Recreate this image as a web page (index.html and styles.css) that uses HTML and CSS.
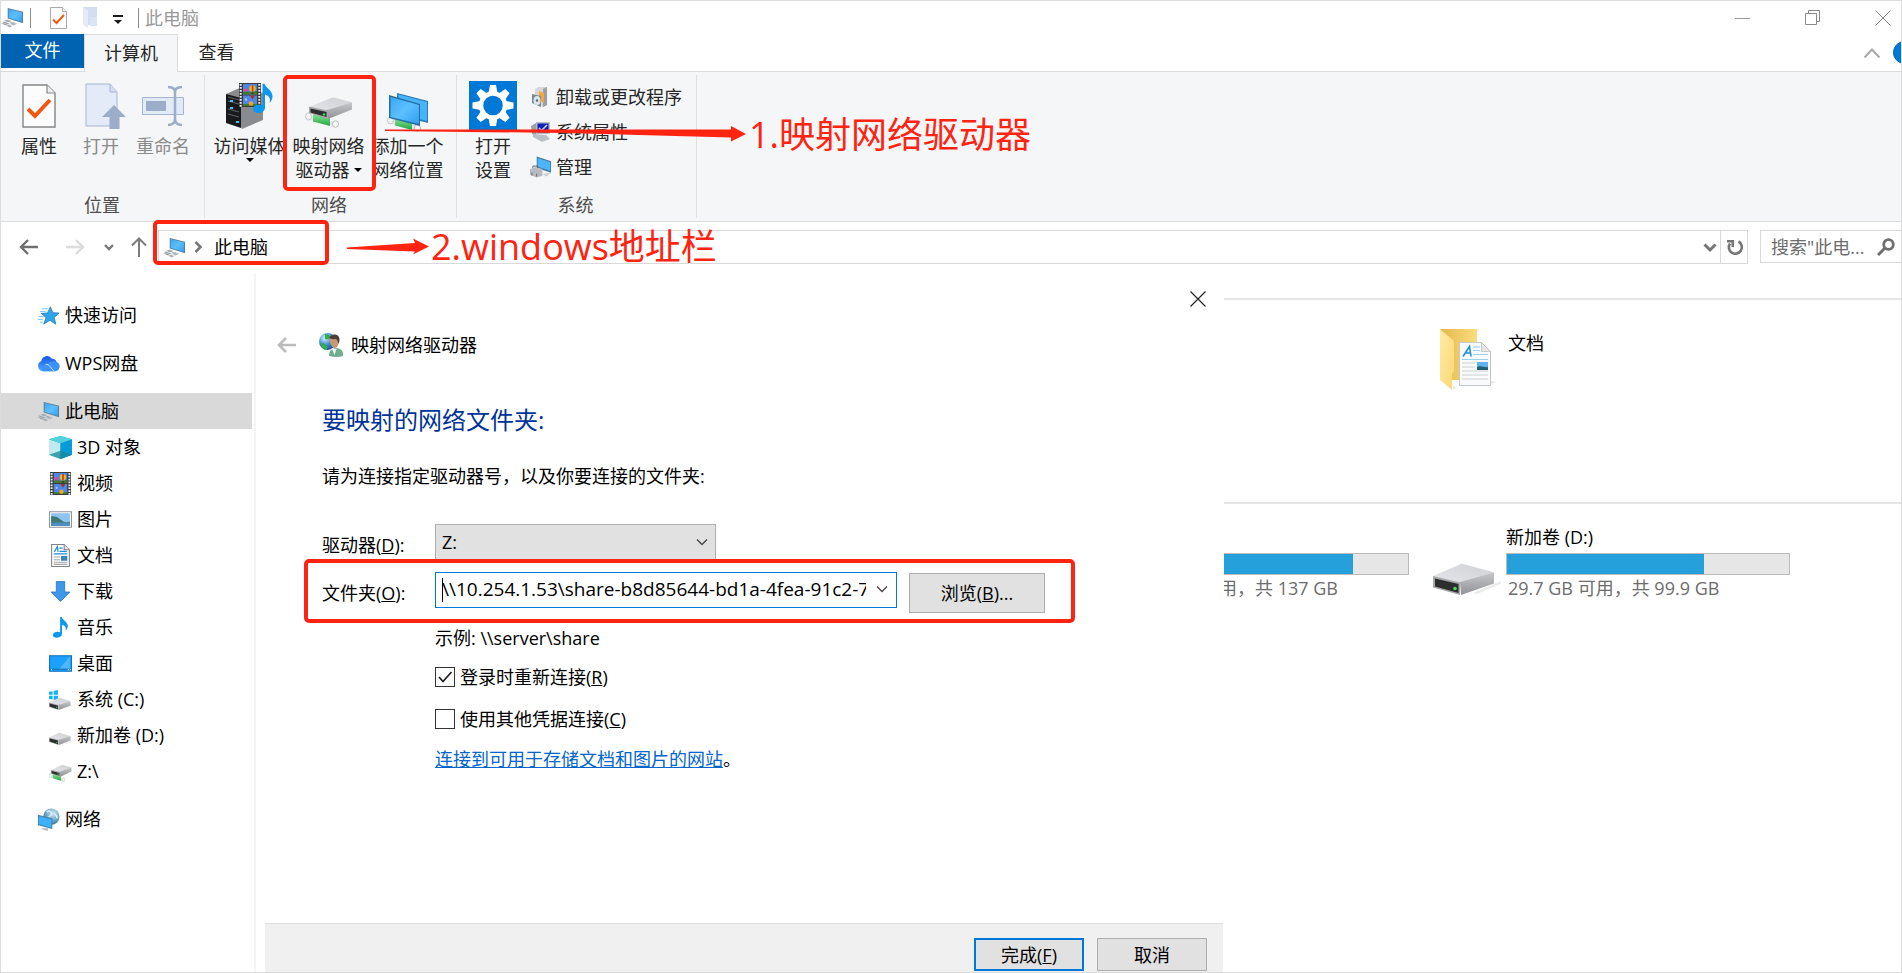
FILE: index.html
```html
<!DOCTYPE html>
<html lang="zh-CN">
<head>
<meta charset="utf-8">
<title>此电脑</title>
<link rel="stylesheet" href="styles.css">
</head>
<body>
<svg class="sprite" width="0" height="0" aria-hidden="true">
  <defs>
    <linearGradient id="g-screen" x1="0" y1="0" x2="1" y2="1"><stop offset="0" stop-color="#3aa6f2"/><stop offset=".5" stop-color="#5cc0ff"/><stop offset="1" stop-color="#2f9df0"/></linearGradient>
    <linearGradient id="g-top" x1="0" y1="1" x2="1" y2="0"><stop offset="0" stop-color="#e4e6ea"/><stop offset="1" stop-color="#cfd1d5"/></linearGradient>
    <linearGradient id="g-side" x1="0" y1="0" x2="0" y2="1"><stop offset="0" stop-color="#c6c7ca"/><stop offset="1" stop-color="#909295"/></linearGradient>
    <linearGradient id="g-pipe" x1="0" y1="0" x2="0" y2="1"><stop offset="0" stop-color="#8be89a"/><stop offset="1" stop-color="#25a544"/></linearGradient>
    <linearGradient id="g-fold" x1="0" y1="0" x2="1" y2="1"><stop offset="0" stop-color="#ffeaa6"/><stop offset="1" stop-color="#fbd873"/></linearGradient>
    <linearGradient id="g-back" x1="0" y1="0" x2="1" y2="0"><stop offset="0" stop-color="#e2b84e"/><stop offset="1" stop-color="#fbdc7c"/></linearGradient>
    <linearGradient id="g-cloud" x1="0" y1="0" x2="0" y2="1"><stop offset="0" stop-color="#1257e0"/><stop offset="1" stop-color="#4fa8ff"/></linearGradient>
    <radialGradient id="g-globe" cx=".35" cy=".3" r=".8"><stop offset="0" stop-color="#d6f3ff"/><stop offset=".5" stop-color="#3f8fd8"/><stop offset="1" stop-color="#173f8f"/></radialGradient>
    <radialGradient id="g-globe2" cx=".6" cy=".3" r=".8"><stop offset="0" stop-color="#cfe9f5"/><stop offset=".6" stop-color="#5f9dbf"/><stop offset="1" stop-color="#2d6385"/></radialGradient>
  </defs>
  <symbol id="i-pc" viewBox="0 0 24 22">
    <path d="M7 1 23 5v12L7 12z" fill="#5d7f96"/><path d="M8 2.200 22 5.800v9.800L8 11.200z" fill="url(#g-screen)"/>
    <path d="M3 14.500 7 13l4 1.500-4 1.700zM9 17.500l4-1.500 4 1.500-4 2zM0 17l4-1.500 4 2L4.500 19zM6 20l4-1 2 1-3 1.500z" fill="#b9c0c6"/>
    <path d="M2 15.500 9 18M5 14l8 3M3 18l7 2" stroke="#8c959c" stroke-width=".8" fill="none"/>
  </symbol>
  <symbol id="i-doccheck" viewBox="0 0 34 44">
    <path d="M1 1h24l8 8v34H1z" fill="#fcfcfd" stroke="#858585" stroke-width="1.400"/><path d="M25 1v8h8" fill="#eee" stroke="#858585" stroke-width="1.200"/>
    <path d="m6 25 7 7L28 16" fill="none" stroke="#f0590f" stroke-width="4"/>
  </symbol>
  <symbol id="i-film" viewBox="0 0 22 24">
    <path d="M0 0h22v24H0z" fill="#3b3b3b"/><path d="M4 1h14v10.500H4zM4 12.500h14V23H4z" fill="#4f86e6"/>
    <path d="M1.700 1v23M20.300 1v23" stroke="#f1f1f1" stroke-width="2" stroke-dasharray="1.800 1.200"/>
    <path d="M4 9l3-1 4 1 7-1v3.500H4z" fill="#3f7a37"/><path d="M4 21h14v2H4z" fill="#3f7a37"/>
    <circle cx="13.500" cy="5.500" r="3.300" fill="#f2b51d"/><path d="M12.800 2.200h1.600v6.600h-1.600z" fill="#b53a1c"/><path d="M12.500 9.500h2v1.500h-2z" fill="#5b2d12"/>
    <circle cx="6.500" cy="7" r="1.800" fill="#e2478b"/><path d="M11 12.500h5l-2.500 4z" fill="#a33418"/><circle cx="12" cy="20.500" r="2.300" fill="#f2a51d"/><circle cx="7" cy="16.500" r="1.200" fill="#a9c9ff"/>
  </symbol>
  <symbol id="i-note" viewBox="0 0 20 30">
    <path d="M9.500 0h2c.5 4 8 6.500 8 13 0 3-1.500 5-3 6.500 1-4 .5-7-4.500-8.500V24c0 3.500-3 5.500-6.500 5.500S0 28 0 25.500 3 21 6 21c1.500 0 2.500.3 3.500.8z" fill="#0c97f0"/>
  </symbol>
  <symbol id="i-drive" viewBox="0 0 68 32">
    <path d="M40 30 68 18v3L44 31z" fill="#ececec"/><path d="M0 13 28 1q1-.5 2 0L60 9q1 1-1 2L27 21z" fill="url(#g-top)"/>
    <path d="M27 19 61 9.500v11L28 32z" fill="url(#g-side)"/><path d="M0 13l27 6.500V32L0 24.500z" fill="#a5a7aa"/><path d="M2 15.500 25.500 21v9L2 23.500z" fill="#2c2d2f"/><circle cx="22" cy="25.500" r="1.800" fill="#3ee04a"/>
  </symbol>
  <symbol id="i-pipe" viewBox="0 0 34 15">
    <path d="M3.500 1.500 30 9.500v5L3.500 7z" fill="#e3e5e6"/><path d="M8 1l17 5v7.500L8 9z" fill="url(#g-pipe)"/><ellipse cx="3.500" cy="4" rx="3" ry="3.500" fill="#f4f4f4" stroke="#c3c6c8"/><ellipse cx="30.500" cy="11.500" rx="3" ry="3.300" fill="#f7f7f7" stroke="#b9bcbe"/>
  </symbol>
  <symbol id="i-netdrive" viewBox="0 0 48 32">
    <use href="#i-pipe" x="0" y="15" width="34" height="16"/>
    <path d="M4 10 26 1q2-.7 4-.2L46 5q1.500.6.500 2L22 16z" fill="url(#g-top)"/><path d="M22 13 47 5.500v7L23 22z" fill="url(#g-side)"/><path d="M4 9.500 23 13.500V22L4 16z" fill="#a5a7aa"/><path d="M5.500 11.500 21.500 15v5L5.500 15.500z" fill="#2c2d2f"/><circle cx="19" cy="17.500" r="1.300" fill="#3ee04a"/>
  </symbol>
  <symbol id="i-docpic" viewBox="0 0 32 44">
    <path d="M.5.500h22l9 9v34H.5z" fill="#f8fafc" stroke="#c4c8cc"/><path d="M22.500.500v9h9z" fill="#e6e6e8" stroke="#c4c8cc"/>
    <path d="M4 14.500 10.500 4.500 12 14.500M6.500 11h5" fill="none" stroke="#2290d0" stroke-width="1.600"/>
    <path d="M14 5h7M14 8.500h7M14 12.500h15M3 17.500h26" stroke="#9dd0ef" stroke-width="1.200"/><path d="M3 21h13M3 25h13M3 29h26M3 33h26M3 37h26" stroke="#cdd1d4" stroke-width="1"/>
    <path d="M18 20h11v8H18z" fill="#5cb4ee"/><path d="M18 25c4-2 7 1 11 0v3H18z" fill="#215d73"/>
  </symbol>
  <symbol id="i-docsm" viewBox="0 0 18 22">
    <path d="M.5.500h12l5 5v16H.5z" fill="#fdfdfd" stroke="#7d8286"/><path d="M12.500.500v5h5" fill="#e6e6e6" stroke="#7d8286"/>
    <path d="M3 7.500 6 2.500l.7 5M8 4h3M8 7h7M2.500 9.500h13" fill="none" stroke="#2290d0" stroke-width="1.200"/>
    <path d="M2.500 12.500h6M2.500 15h6M2.500 17.500h13M2.500 19.500h13" stroke="#a3a8ac"/><path d="M9.500 11.500h6V16h-6z" fill="#3d83b8"/>
  </symbol>
  <symbol id="i-chev" viewBox="0 0 12 8"><path d="m1 1.500 5 5 5-5" fill="none" stroke="currentColor" stroke-width="1.300"/></symbol>
</svg>

<div class="window">
  <header class="titlebar">
    <svg class="ic24" viewBox="0 0 24 22"><use href="#i-pc"/></svg>
    <span class="sep"></span>
    <button class="plain qa-check" aria-label="属性"><svg width="17" height="22"><use href="#i-doccheck"/></svg></button>
    <button class="plain qa-folder" aria-label="新建文件夹"><svg width="15" height="22" viewBox="0 0 15 22"><path d="M0 0h14v18H4z" fill="#d3dff1"/><path d="M0 0l5 4v17l-5-3z" fill="#e4ecf8"/><path d="M7 10h7v9H7z" fill="#dbe6f5"/></svg></button>
    <button class="plain qa-more" aria-label="自定义"><svg width="10" height="9" viewBox="0 0 10 9"><path d="M0 0h10v2H0zM1 5h8L5 9z" fill="#1a1a1a"/></svg></button>
    <span class="sep"></span>
    <span class="title">此电脑</span>
    <div class="winbtns">
      <button class="plain" aria-label="最小化"><svg width="16" height="16" viewBox="0 0 16 16"><path d="M0 8.500h15" stroke="#999"/></svg></button>
      <button class="plain" aria-label="还原"><svg width="16" height="16" viewBox="0 0 16 16"><path d="M.5 3.500h11v11H.5zM3.500 3.500v-3h11v11h-3" fill="none" stroke="#8a8a8a"/></svg></button>
      <button class="plain" aria-label="关闭"><svg width="16" height="16" viewBox="0 0 16 16"><path d="m.5.500 15 15m0-15-15 15" stroke="#8a8a8a"/></svg></button>
    </div>
  </header>

  <nav class="tabs">
    <button class="tab file">文件</button>
    <button class="tab active">计算机</button>
    <button class="tab view">查看</button>
    <div class="tab-end">
      <button class="plain" aria-label="折叠功能区"><svg width="18" height="12" viewBox="0 0 18 12"><path d="m1.500 10.500 7.500-8 7.500 8" fill="none" stroke="#a8a8a8" stroke-width="2"/></svg></button>
      <button class="plain help" aria-label="帮助"></button>
    </div>
  </nav>

  <section class="ribbon">
    <div class="group g1">
      <div class="tools">
        <button class="tool"><span class="pic"><svg width="34" height="44"><use href="#i-doccheck"/></svg></span>属性</button>
        <button class="tool off"><span class="pic"><svg class="open" width="42" height="46" viewBox="0 0 42 46"><path d="M1 1h24l7 8v34H1z" fill="#e3ebf8" stroke="#a5b6d2"/><path d="M25 1v8h7" fill="#d2def0" stroke="#a5b6d2"/><path d="M29 22 41 34h-6.500v12h-10V34H17z" fill="#9dacc8"/></svg></span>打开</button>
        <button class="tool off"><span class="pic"><svg width="42" height="42" viewBox="0 0 42 42"><path d="M.5 12.500h41v17H.5z" fill="#e1eaf8" stroke="#a5b6d2"/><path d="M4 16h20v10H4z" fill="#9dacc8"/><path d="M26 2q7 0 7 5v27q0 6-7 6M40 2q-7 0-7 5v27q0 6 7 6" fill="none" stroke="#9dacc8" stroke-width="2.500"/></svg></span>重命名</button>
      </div>
      <div class="gname">位置</div>
    </div>
    <div class="group g2">
      <div class="tools">
        <button class="tool"><span class="pic"><svg width="48" height="48" viewBox="0 0 48 48"><path d="M0 12 16 5l21 6v27L16 47z" fill="#8a8b8e"/><path d="M0 12 15 16v30L0 41z" fill="#17191c"/><path d="M2 15l11 3M2 19l11 3M2 27l11 3M2 32l11 3" stroke="#5c6168" stroke-width="1.200"/><path d="M4 19h3M4 26h3M10 40h3" stroke="#35c5ff" stroke-width="2"/><svg x="13" y="1" width="22" height="24" viewBox="0 0 22 24"><use href="#i-film"/></svg><svg x="27" y="1" width="20" height="31" viewBox="0 0 20 30"><use href="#i-note"/></svg></svg></span>访问媒体<i class="caret"></i></button>
        <button class="tool"><span class="pic"><svg class="low" width="48" height="32"><use href="#i-netdrive"/></svg></span>映射网络<br>驱动器<i class="caret inline"></i></button>
        <button class="tool"><span class="pic"><svg class="low" width="42" height="42" viewBox="0 0 42 42"><svg x="0" y="24" width="34" height="16"><use href="#i-pipe"/></svg><path d="M10 1 41 9v22L10 23z" fill="#2c7db4"/><path d="M11.500 2.500 40 10v19L11.500 21.500z" fill="#49b3f7"/><path d="M2 3l31 9v22L2 26z" fill="#246d9f"/><path d="M3.500 5 32 13v19L3.500 25z" fill="url(#g-screen)"/></svg></span>添加一个<br>网络位置</button>
      </div>
      <div class="gname">网络</div>
    </div>
    <div class="group g3">
      <div class="tools">
        <button class="tool"><span class="pic"><svg width="48" height="49" viewBox="0 0 48 49"><path d="M0 0h48v49H0z" fill="#0078d7"/><g fill="#fff"><g id="teeth"><path d="M19.500 12 21 4h6l1.500 8zM19.500 37 21 45h6l1.500-8z"/></g><use href="#teeth" transform="rotate(45 24 24.500)"/><use href="#teeth" transform="rotate(90 24 24.500)"/><use href="#teeth" transform="rotate(135 24 24.500)"/></g><circle cx="24" cy="24.500" r="12" fill="#0078d7" stroke="#fff" stroke-width="4.500"/></svg></span>打开<br>设置</button>
        <div class="rows">
          <button class="row"><svg width="22" height="22" viewBox="0 0 22 22"><path d="M5 3l3-2h9v18l-4 2-8-4z" fill="#d7d7d7"/><path d="M13 3l4-2v18l-4 2z" fill="#9e9e9e"/><path d="M9 5l5 2v10l-5-3z" fill="#f4a640"/><path d="M2 8l9 2v11l-9-4z" fill="#7c8b93"/><ellipse cx="7" cy="14.500" rx="3.500" ry="4.500" fill="#d9e8ef"/><circle cx="7" cy="14.500" r="1.200" fill="#667"/></svg>卸载或更改程序</button>
          <button class="row"><svg width="22" height="22" viewBox="0 0 22 22"><path d="M1 5l5-3v13l-4-2z" fill="#9aa0a6"/><path d="M6 1h14v12H6z" fill="#b5bcc4"/><path d="M7.500 2.500h11v9h-11z" fill="#1420b8"/><path d="m9 7 2.500 2.500L17 4" fill="none" stroke="#cfd6ff" stroke-width="1.500"/><path d="M3 13l13 1 4 4-8 3-9-5z" fill="#b9bfc5"/></svg>系统属性</button>
          <button class="row"><svg width="22" height="23" viewBox="0 0 23 23"><path d="M7 0l15 5v12L7 12z" fill="#3f7ea8"/><path d="M8 1.500 21 6v9L8 10.500z" fill="#4db5f8"/><path d="M0 13l6-2 7 2v7l-6 2-7-3z" fill="#b7bcc0"/><path d="M3 12v-2h5v2M2 17v3M7 18v3" stroke="#5e6468" fill="none"/><path d="M13 18l9-1-5 4z" fill="#c8cdd1"/></svg>管理</button>
        </div>
      </div>
      <div class="gname">系统</div>
    </div>
  </section>

  <section class="addressbar">
    <div class="navs">
      <button class="plain" aria-label="后退"><svg width="20" height="16" viewBox="0 0 20 16"><path d="M9 1 2 8l7 7M2 8h17" fill="none" stroke="#6f6f6f" stroke-width="2.400"/></svg></button>
      <button class="plain fwd" aria-label="前进"><svg width="20" height="16" viewBox="0 0 20 16"><path d="m11 1 7 7-7 7m7-7H1" fill="none" stroke="#dcdcdc" stroke-width="2.400"/></svg></button>
      <button class="plain recent" aria-label="最近"><svg width="10" height="7" viewBox="0 0 10 7"><path d="m1 1 4 4 4-4" fill="none" stroke="#777" stroke-width="2.400"/></svg></button>
      <button class="plain up" aria-label="向上"><svg width="16" height="20" viewBox="0 0 16 20"><path d="M1 8.500 8 1.500l7 7M8 2v18" fill="none" stroke="#7b7b7b" stroke-width="2"/></svg></button>
    </div>
    <div class="path">
      <svg class="ic24" viewBox="0 0 24 22"><use href="#i-pc"/></svg>
      <svg class="crumb" width="9" height="12" viewBox="0 0 9 12"><path d="m1.500 1 5 5-5 5" fill="none" stroke="#777" stroke-width="2.600"/></svg>
      <span>此电脑</span>
      <button class="plain drop" aria-label="展开"><svg width="14" height="10" viewBox="0 0 14 10"><path d="m1.500 1.500 5.500 5.500 5.500-5.500" fill="none" stroke="#757575" stroke-width="3"/></svg></button>
      <button class="plain refresh" aria-label="刷新"><svg width="17" height="17" viewBox="0 0 17 17"><path d="M11.500 2.500A6.500 6.500 0 1 1 3 4.500" fill="none" stroke="#757575" stroke-width="2.600"/><path d="M0 1h7v7H4.500V3.500H0z" fill="#757575"/></svg></button>
    </div>
    <div class="search">
      <input type="text" aria-label="搜索" placeholder="搜索&quot;此电...">
      <svg width="18" height="18" viewBox="0 0 18 18"><circle cx="11.500" cy="6.500" r="4.800" fill="none" stroke="#6f6f6f" stroke-width="2.800"/><path d="m8 10-7 7" stroke="#6f6f6f" stroke-width="3"/></svg>
    </div>
  </section>

  <main class="body">
    <aside class="side">
      <a class="item" href="#"><svg class="ic24" viewBox="0 0 24 20"><path d="M14 1l2.500 6 6.500.5-5 4.500 1.500 7L13.500 15 7 19l2.500-7-5-4 6.500-.7z" fill="#2fa4ea" stroke="#1778bd" stroke-width=".8"/><path d="M5 3h6M3 6h6M2 11h5M1 14h5M3 17h3" stroke="#6cc0f2"/></svg>快速访问</a>
      <a class="item" href="#"><svg class="ic24" viewBox="0 0 24 18"><path d="M6 17a5.500 5.500 0 0 1-1.500-10.500A6 6 0 0 1 15.500 4c3 0 4 1 5 3.500A5 5 0 0 1 19 17z" fill="url(#g-cloud)"/><path d="M5 16.500C9 9 15 5 20.500 7.500A5 5 0 0 1 19 17H6z" fill="#3d92fa"/><path d="M9 10c4-1 6 5 9 7" stroke="#cfe5ff" fill="none"/></svg>WPS网盘</a>
      <a class="item current" href="#"><svg class="ic24" viewBox="0 0 24 22"><use href="#i-pc"/></svg>此电脑</a>
      <div class="sub">
        <a class="item" href="#"><svg class="ic24" viewBox="0 0 22 22"><path d="M11 0l11 3v15l-11 4-11-4V3z" fill="#0aa7d8"/><path d="M0 3l11 4v15L0 18z" fill="#bfeaf2"/><path d="M11 7l11-4v15l-11 4z" fill="#079bd8"/><path d="M0 3l11-3 11 3-11 4z" fill="#53d2dd"/><path d="M0 18l11-4 11 4-11 4z" fill="#18859a" opacity=".75"/></svg>3D 对象</a>
        <a class="item" href="#"><svg class="ic24" viewBox="0 0 22 24"><use href="#i-film"/></svg>视频</a>
        <a class="item" href="#"><svg class="ic24" viewBox="0 0 22 16"><path d="M.5.500h21v15H.5z" fill="#fff" stroke="#8e9499"/><path d="M2 2h18v12H2z" fill="#8fc3f2"/><path d="M2 5q5-1 9 3t9 2v4H2z" fill="#3e7a70"/><path d="M2 11h18v3H2z" fill="#4e8fc4"/></svg>图片</a>
        <a class="item" href="#"><svg class="ic24" viewBox="0 0 18 22"><use href="#i-docsm"/></svg>文档</a>
        <a class="item" href="#"><svg class="ic24" viewBox="0 0 22 20"><path d="M7 .500h8v10h5l-9 9-9-9h5z" fill="#3f97e8" stroke="#2a79cc" stroke-width=".8"/></svg>下载</a>
        <a class="item" href="#"><svg class="ic24" viewBox="0 0 22 24"><svg x="3" y="1" width="16" height="22" viewBox="0 0 20 30" preserveAspectRatio="none"><use href="#i-note"/></svg></svg>音乐</a>
        <a class="item" href="#"><svg class="ic24" viewBox="0 0 22 16"><path d="M.5.500h21v15H.5z" fill="#1ba0fb" stroke="#1373bb"/><path d="M10 13 20 1v12z" fill="#4db6fd"/><path d="M1 13.500h20" stroke="#1373bb"/><path d="M2 14h1M18 14h1M20 14h1" stroke="#fff"/></svg>桌面</a>
        <a class="item" href="#"><svg class="ic24" viewBox="0 0 22 20"><path d="M0 2.500 3.500 2v3.500H0zM4.500 1.800 8.500 1v4.500h-4zM0 6.500h3.500V10L0 9.500zM4.500 6.500h4V11l-4-.8z" fill="#12b4f2"/><svg x="0" y="8" width="23" height="12" viewBox="0 0 68 32" preserveAspectRatio="none"><use href="#i-drive"/></svg></svg>系统 (C:)</a>
        <a class="item" href="#"><svg class="ic24" viewBox="0 0 22 20"><svg x="0" y="7" width="23" height="12" viewBox="0 0 68 32" preserveAspectRatio="none"><use href="#i-drive"/></svg></svg>新加卷 (D:)</a>
        <a class="item" href="#"><svg class="ic24" viewBox="0 0 23 20"><svg y="3" width="23" height="18" viewBox="0 0 48 32" preserveAspectRatio="none"><use href="#i-netdrive"/></svg></svg>Z:\</a>
      </div>
      <a class="item" href="#"><svg class="ic24" viewBox="0 0 24 24"><circle cx="15" cy="9" r="8.500" fill="url(#g-globe2)"/><path d="M10 4q4-2 5 1t-3 4M18 6q3 1 3 5" stroke="#d9f0fa" stroke-width="1.500" fill="none"/><path d="M1 7l15 4v11L1 18z" fill="#3f86ae"/><path d="M2 8.500 15 12v8.500L2 17z" fill="#3fb1fb"/><path d="M6 21l6 0-1 3-7-2z" fill="#b5bcc1"/></svg>网络</a>
    </aside>

    <form class="dialog">
      <div class="dlg-top"><button type="button" class="plain" aria-label="关闭"><svg width="16" height="16" viewBox="0 0 16 16"><path d="m.5.500 15 15m0-15-15 15" stroke="#222" stroke-width="1.200"/></svg></button></div>
      <div class="dlg-title">
        <button type="button" class="plain" aria-label="返回"><svg width="20" height="16" viewBox="0 0 20 16"><path d="M9 1 2 8l7 7M2 8h17" fill="none" stroke="#bcbcbc" stroke-width="2.600"/></svg></button>
        <svg width="24" height="24" viewBox="0 0 24 24"><circle cx="8.500" cy="8.500" r="8.500" fill="url(#g-globe)"/><path d="M2 10q4 0 6 3t-2 4q-4-2-4-7zM6 1q5 0 5 3t-5 2z" fill="#2fae4a"/><path d="M10 23q0-7 6-8 7 0 8 5v3q-6 2-14 0z" fill="#6fae93"/><path d="M12.500 15l3 7 2-6z" fill="#eef4ef"/><path d="M10.500 7q0-4.500 4.500-4.500T20 7q0 7-4.500 8.500-4-2-5-8.500z" fill="#c99872"/><path d="M10 5q2-4 6-3.500 5 .5 4.500 6.500l-1.500 3q0-5-3-5-4 .5-6-1z" fill="#4a3d35"/></svg>
        <span>映射网络驱动器</span>
      </div>
      <div class="dlg-body">
        <h1>要映射的网络文件夹:</h1>
        <p class="lead">请为连接指定驱动器号，以及你要连接的文件夹:</p>
        <div class="fields">
          <label for="drive">驱动器(<u>D</u>):</label>
          <div class="pick"><select id="drive"><option>Z:</option></select><svg width="12" height="8"><use href="#i-chev"/></svg></div>
          <label for="folder">文件夹(<u>O</u>):</label>
          <div class="folder-row">
            <div class="combo"><input id="folder" type="text" value="\\10.254.1.53\share-b8d85644-bd1a-4fea-91c2-7"><button type="button" class="plain" aria-label="展开列表"><svg width="12" height="8"><use href="#i-chev"/></svg></button></div>
            <button type="button" class="btn browse">浏览(<u>B</u>)...</button>
          </div>
        </div>
        <div class="extras">
          <p>示例: \\server\share</p>
          <label class="check"><span class="tick"><input type="checkbox" checked><svg width="20" height="20" viewBox="0 0 20 20"><path d="m4 10 4 4.500L16.500 5" fill="none" stroke="#222" stroke-width="1.800"/></svg></span><span>登录时重新连接(<u>R</u>)</span></label>
          <label class="check"><span class="tick"><input type="checkbox"></span><span>使用其他凭据连接(<u>C</u>)</span></label>
          <p class="site"><a href="#">连接到可用于存储文档和图片的网站</a>。</p>
        </div>
      </div>
      <footer class="dlg-foot">
        <button type="submit" class="btn primary">完成(<u>F</u>)</button>
        <button type="button" class="btn">取消</button>
      </footer>
    </form>

    <section class="content">
      <div class="folders">
        <a class="tile" href="#">
          <svg width="56" height="62" viewBox="0 0 56 62"><path d="M0 0h37v51H10z" fill="url(#g-back)"/><path d="M0 0l14 12v30l-2 3v16L0 51z" fill="url(#g-fold)"/><path d="M13 61l4-3-4-1zM51 55l5-2-5-1z" fill="#e8e8e8"/><svg x="19" y="13" width="32" height="44"><use href="#i-docpic"/></svg></svg>
          <span>文档</span>
        </a>
      </div>
      <div class="drives">
        <div class="disk-c">
          <div class="bar"><i></i></div>
          <div class="size"><span>用，共 137 GB</span></div>
        </div>
        <svg class="disk-ic" width="68" height="32"><use href="#i-drive"/></svg>
        <div class="disk-d">
          <div class="name">新加卷 (D:)</div>
          <div class="bar"><i></i></div>
          <div class="size">29.7 GB 可用，共 99.9 GB</div>
        </div>
      </div>
    </section>
  </main>

  <div class="mark box-map"></div>
  <div class="mark box-path"></div>
  <div class="mark box-folder"></div>
  <svg class="arrow a1" width="361" height="18" viewBox="0 0 361 18"><path d="M0 4.500 346 4.500V1L361 9 346 16.500V12.500L180 8 0 6z" fill="#ff2312"/></svg>
  <svg class="arrow a2" width="82" height="18" viewBox="0 0 82 18"><path d="M0 9.500 68 5 66 .500 82 8.500 66 16.500l2-3L0 11z" fill="#ff2312"/></svg>
  <div class="note n1">1.映射网络驱动器</div>
  <div class="note n2">2.windows地址栏</div>
</div>
</body>
</html>
```
FILE: styles.css
```css
* { box-sizing: border-box; }
body {
  margin: 0;
  font: 18px/24px "Open Sans", "Noto Sans CJK SC", sans-serif;
  color: #000;
  background: #fff;
}
button, input, select { font: inherit; color: inherit; }
button { padding: 0; }
svg { display: block; flex: none; }
a { color: inherit; text-decoration: none; }
p { margin: 0; }
.sprite { position: absolute; }
.plain { display: flex; border: 0; background: none; }
.ic24 { width: 23px; height: 23px; }

.window {
  position: relative;
  display: flex;
  flex-direction: column;
  min-height: 100vh;
  border: 1px solid #dcdcdc;
}

/* title bar */
.titlebar { display: flex; align-items: center; height: 33px; }
.titlebar .sep { width: 1px; height: 20px; margin-left: 6px; background: #8c8c8c; }
.qa-check { margin-left: 19px; }
.qa-folder { margin-left: 16px; }
.qa-more { margin: 4px 9px 0 15px; }
.title { margin-left: 6px; color: #999; }
.winbtns { display: flex; gap: 54px; margin-left: auto; padding-right: 10px; }

/* ribbon tabs */
.tabs { display: flex; height: 38px; margin-bottom: -1px; overflow: hidden; }
.tab { height: 37px; padding-bottom: 2px; border: 0; background: none; color: #262626; }
.tab.file { width: 83px; height: 34px; background: #0063b1; color: #fff; }
.tab.active {
  position: relative;
  z-index: 1;
  width: 94px;
  height: 38px;
  border: 1px solid #dadbdc;
  border-bottom: 0;
  background: #f5f6f7;
}
.tab.view { width: 77px; }
.tab-end { display: flex; align-items: center; gap: 12px; height: 37px; margin: 0 -15px 0 auto; }
.help { width: 23px; height: 23px; border-radius: 50%; background: #0078d7; border: 1px solid #0061b5; }

/* ribbon */
.ribbon {
  display: flex;
  height: 151px;
  border: solid #dadbdc;
  border-width: 1px 0;
  background: #f5f6f7;
}
.group {
  display: flex;
  flex-direction: column;
  margin: 3px 0;
  padding-top: 6px;
  border-right: 1px solid #e0e1e2;
}
.g1 { width: 204px; padding-left: 7px; }
.g2 { width: 252px; padding-left: 5px; }
.g3 { width: 240px; padding-left: 6px; }
.tools { display: flex; }
.tool {
  width: 62px;
  border: 0;
  background: none;
  color: #262626;
  white-space: nowrap;
  display: block;
  align-self: flex-start;
}
.g2 .tool { width: 79px; }
.g3 .tool { width: 60px; }
.tool.off { color: #8a8a8a; }
.pic { display: flex; justify-content: center; align-items: center; height: 49px; margin-bottom: 4px; }
.low { margin-top: 14px; }
.open { margin-left: 10px; }
.caret {
  display: block;
  width: 8px;
  margin: 0 auto;
  border: solid transparent;
  border-width: 4px 4px 0;
  border-top-color: #000;
}
.caret.inline { display: inline-block; margin: 0 0 4px 4px; vertical-align: middle; }
.rows { display: flex; flex-direction: column; gap: 11px; padding: 4px 0 0 7px; }
.row { display: flex; align-items: center; gap: 4px; height: 24px; border: 0; background: none; color: #262626; white-space: nowrap; }
.gname { margin-top: auto; padding: 0 8px 1px 0; text-align: center; color: #4c4c4c; }

/* address bar */
.addressbar { display: flex; height: 51px; padding-top: 8px; }
.navs { display: flex; align-items: center; width: 157px; height: 34px; padding-left: 18px; }
.fwd { margin-left: 26px; }
.recent { margin-left: 19px; }
.up { margin-left: 17px; }
.path {
  display: flex;
  align-items: center;
  flex: 1;
  height: 34px;
  padding-left: 4px;
  border: 1px solid #d9d9d9;
}
.crumb { margin: 0 11px 0 8px; }
.drop { margin: 2px 3px 0 auto; }
.refresh {
  align-items: center;
  justify-content: center;
  align-self: stretch;
  width: 27px;
  padding-left: 2px;
  border-left: 1px solid #d9d9d9;
}
.search {
  display: flex;
  align-items: center;
  width: 141px;
  height: 33px;
  margin-left: 12px;
  padding: 0 6px 0 10px;
  border: 1px solid #d9d9d9;
  border-right: 0;
}
.search input { flex: 1; min-width: 0; padding: 0; border: 0; outline: 0; background: none; }
.search input::placeholder { color: #6d6d6d; opacity: 1; }

/* body */
.body {
  flex: 1;
  display: grid;
  grid-template-columns: 264px minmax(0, 958px) minmax(0, 1fr);
}
.side {
  display: flex;
  flex-direction: column;
  gap: 12px;
  width: 255px;
  padding: 24px 2px 0 0;
  border-right: 2px solid #f5f5f5;
}
.item { display: flex; align-items: center; gap: 5px; height: 36px; padding-left: 36px; }
.sub { margin-top: -12px; }
.sub .item { padding-left: 48px; }
.current { background: #d9d9d9; }

/* dialog */
.dialog { display: flex; flex-direction: column; background: #fff; }
.dlg-top { display: flex; justify-content: flex-end; align-items: center; height: 52px; padding-right: 17px; }
.dlg-title { display: flex; align-items: center; height: 40px; padding-left: 12px; }
.dlg-title > svg { margin: 0 10px 0 20px; }
.dlg-title > button + svg { margin: 0 8px 0 22px; }
.dlg-body { padding: 37px 0 24px 57px; }
h1 { margin: 0 0 26px; font-size: 24px; line-height: 36px; font-weight: 400; color: #039; }
.fields {
  display: grid;
  grid-template-columns: 113px 1fr;
  gap: 12px 0;
  align-items: start;
  margin-top: 36px;
}
.fields label { padding-top: 9px; }
.pick { position: relative; width: 281px; }
.pick select {
  appearance: none;
  display: block;
  width: 100%;
  height: 36px;
  padding: 0 6px;
  border: 1px solid #adadad;
  border-radius: 0;
  background: #e1e1e1;
}
.pick svg { position: absolute; right: 8px; top: 14px; color: #444; pointer-events: none; }
.folder-row { display: flex; gap: 12px; }
.combo {
  position: relative;
  display: flex;
  align-items: center;
  width: 462px;
  height: 36px;
  padding: 0 8px 2px 6px;
  border: 1px solid #0078d7;
}
.combo::before { content: ""; position: absolute; left: 6px; top: 5px; width: 1px; height: 24px; background: #000; }
.combo input { flex: 1; min-width: 0; margin-right: 10px; padding: 0; border: 0; outline: 0; background: none; font-size: 19px; }
.combo svg { color: #444; }
.btn { width: 110px; height: 33px; border: 1px solid #adadad; background: #e1e1e1; }
.btn.browse { width: 136px; height: 40px; margin-top: 1px; }
.btn.primary { border: 2px solid #0078d7; }
.extras { padding: 13px 0 0 113px; }
.check { display: flex; align-items: center; gap: 5px; width: max-content; margin-top: 15px; }
.check + .check { margin-top: 18px; }
.tick { position: relative; width: 20px; height: 20px; }
.tick input { appearance: none; display: block; width: 20px; height: 20px; margin: 0; border: 1px solid #333; background: #fff; }
.tick svg { position: absolute; left: 0; top: 0; }
.site { margin-top: 16px; }
.site a { color: #06c; text-decoration: underline; }
.dlg-foot {
  display: flex;
  justify-content: flex-end;
  gap: 13px;
  height: 49px;
  margin-top: auto;
  padding: 14px 16px 0 0;
  border-top: 1px solid #dfdfdf;
  background: #f0f0f0;
}

/* content pane */
.content { min-width: 0; margin-left: 1px; padding-top: 25px; overflow: hidden; }
.folders { height: 204px; padding: 29px 0 0 216px; border-top: 2px solid #e5e5e5; }
.tile { display: flex; gap: 12px; }
.tile span { padding-top: 2px; }
.drives { display: flex; padding-top: 21px; border-top: 2px solid #e5e5e5; color: #6d6d6d; }
.bar { height: 22px; border: 1px solid #bcbcbc; background: #e6e6e6; }
.bar i { display: block; height: 100%; background: #26a0da; }
.disk-c { width: 185px; padding-top: 28px; }
.disk-c .bar { border-left: 0; }
.disk-c .bar i { width: 70%; }
.disk-d { width: 284px; }
.disk-d .name { margin-bottom: 4px; color: #000; }
.disk-d .bar i { width: 70%; }
.size { margin-top: 1px; padding-left: 2px; white-space: nowrap; }
.disk-c .size { display: flex; justify-content: flex-end; width: 114px; padding: 0; overflow: hidden; }
.disk-ic { margin: 38px 5px 0 24px; }

/* annotations laid over the window */
.mark { position: absolute; border: 4px solid #ff2312; border-radius: 5px; pointer-events: none; }
.box-map { left: 282px; top: 74px; width: 93px; height: 116px; }
.box-path { left: 152px; top: 219px; width: 176px; height: 45px; }
.box-folder { left: 303px; top: 558px; width: 771px; height: 64px; }
.arrow { position: absolute; }
.a1 { left: 384px; top: 124px; }
.a2 { left: 346px; top: 237px; }
.note { position: absolute; font-size: 36px; line-height: 48px; color: #ff2312; white-space: nowrap; }
.n1 { left: 748px; top: 110px; }
.n2 { left: 430px; top: 222px; }
```
